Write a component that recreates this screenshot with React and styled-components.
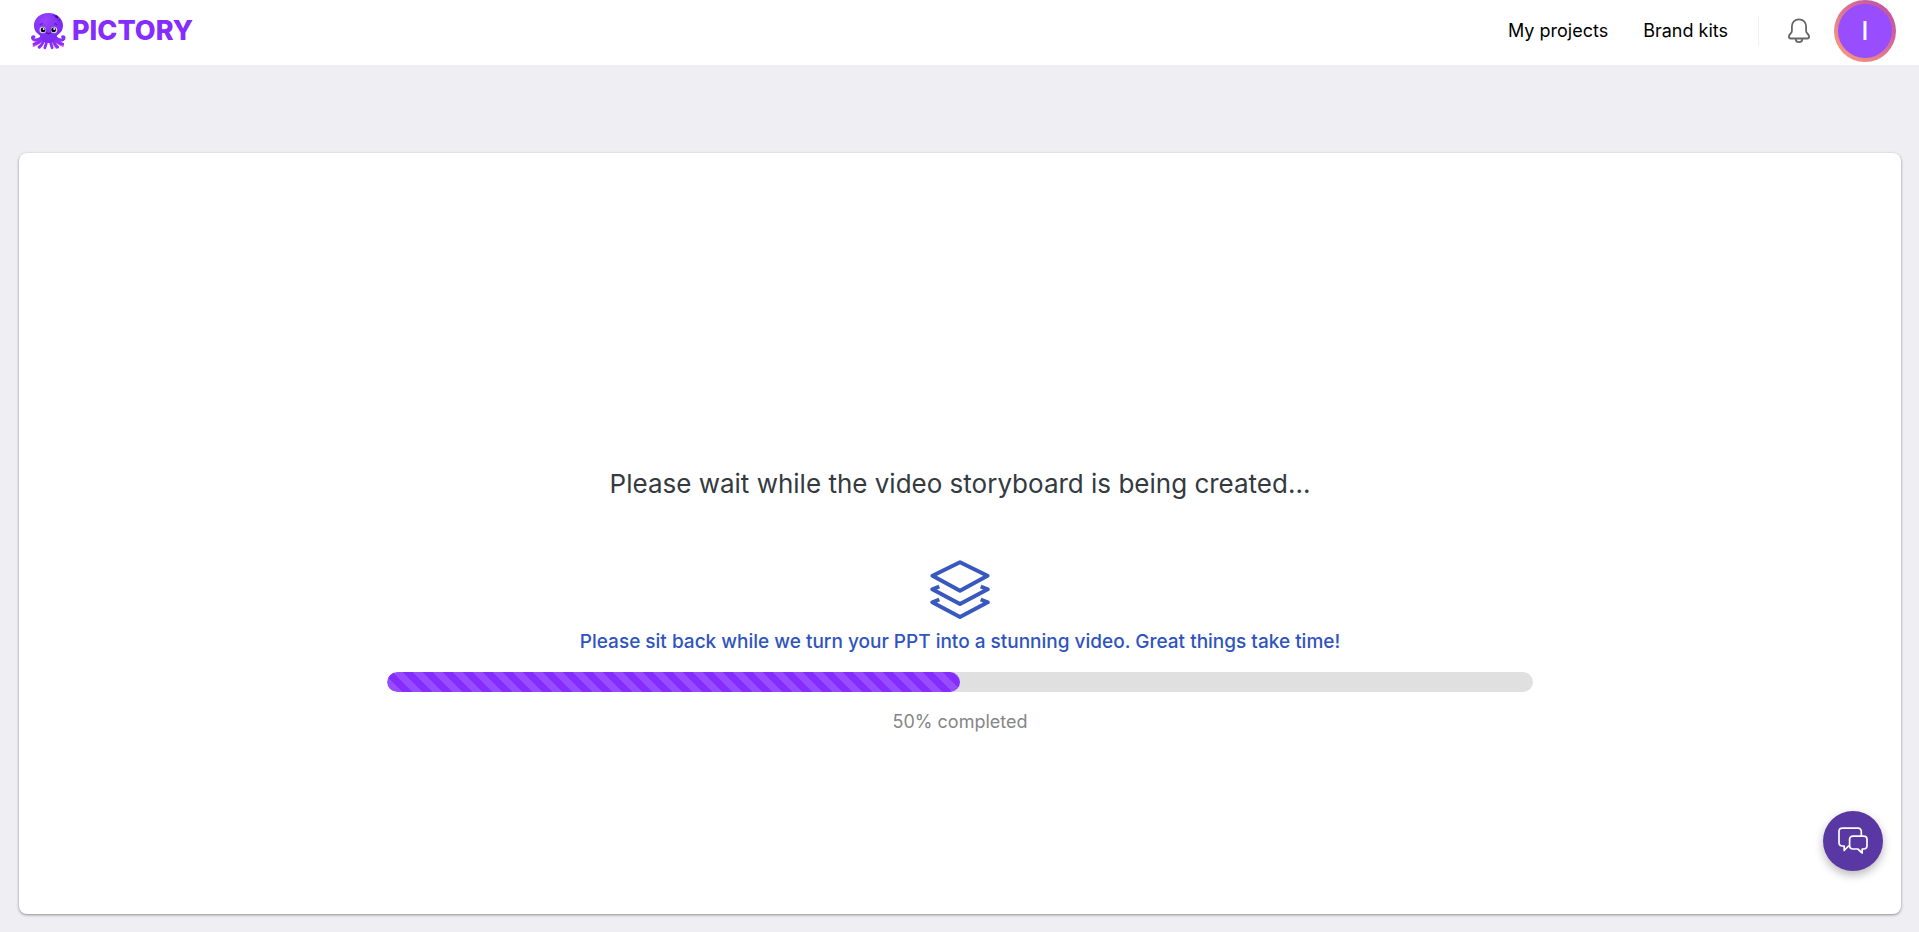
import React from "react";
import styled, { createGlobalStyle } from "styled-components";

const GlobalStyle = createGlobalStyle`
  * { box-sizing: border-box; }
  body {
    margin: 0;
    background: #eeeef3;
    font-family: Inter, "Liberation Sans", sans-serif;
  }
`;

const Page = styled.div`
  display: flex;
  flex-direction: column;
  min-height: 100vh;
`;

const Header = styled.header`
  display: flex;
  align-items: center;
  justify-content: space-between;
  height: 65px;
  padding: 0 23px 3px 30px;
  background: #ffffff;
`;

const Brand = styled.a`
  display: flex;
  align-items: center;
  gap: 6px;
  color: #852dff;
  text-decoration: none;
`;

const BrandName = styled.span`
  font-size: 27px;
  line-height: 32px;
  font-weight: 800;
`;

const HeaderRight = styled.div`
  display: flex;
  align-items: center;
`;

const Nav = styled.nav`
  display: flex;
  gap: 35px;
  padding-right: 30px;
  border-right: 1px solid #f0f0f3;
`;

const NavLink = styled.a`
  color: #000000;
  font-size: 18px;
  line-height: 30px;
  font-weight: 400;
  text-decoration: none;
`;

const IconButton = styled.button`
  display: flex;
  margin: 0 24px 0 29px;
  padding: 0;
  border: 0;
  background: none;
  color: #666666;
  cursor: pointer;
`;

const Avatar = styled.button`
  width: 62px;
  height: 62px;
  padding: 0;
  border: 4px solid transparent;
  border-radius: 50%;
  background:
    linear-gradient(#984dff, #984dff) padding-box,
    linear-gradient(45deg, #ff9f78, #b84aa8) border-box;
  color: #ffffff;
  font-family: inherit;
  font-size: 25px;
  font-weight: 500;
  cursor: pointer;
`;

const Main = styled.main`
  display: flex;
  flex: 1;
  padding: 88px 18px 18px 19px;
`;

const Card = styled.section`
  display: flex;
  flex: 1;
  flex-direction: column;
  align-items: center;
  justify-content: center;
  padding-top: 132px;
  border-radius: 8px;
  background: #ffffff;
  box-shadow: 0 1px 3px rgba(0, 0, 0, 0.4);
`;

const Title = styled.h1`
  margin: 0 0 56px;
  color: #343a40;
  font-size: 26px;
  line-height: 40px;
  font-weight: 400;
`;

const Message = styled.p`
  margin: 8px 0 16px;
  color: #2f54bf;
  font-size: 19px;
  line-height: 28px;
  font-weight: 500;
`;

const Track = styled.div`
  width: 60.9%;
  height: 20px;
  border-radius: 10px;
  overflow: hidden;
  background: #e0e0e0;
`;

const Fill = styled.div`
  height: 100%;
  border-radius: 10px;
  background-color: #852dff;
  background-image: linear-gradient(
    45deg,
    rgba(255, 255, 255, 0.15) 25%,
    transparent 25%,
    transparent 50%,
    rgba(255, 255, 255, 0.15) 50%,
    rgba(255, 255, 255, 0.15) 75%,
    transparent 75%
  );
  background-size: 20px 20px;
  background-position: 6px 0;
`;

const Status = styled.p`
  margin: 16px 0 0;
  color: #868686;
  font-size: 18px;
  line-height: 28px;
  font-weight: 400;
`;

const ChatButton = styled.button`
  position: fixed;
  right: 36px;
  bottom: 61px;
  display: flex;
  align-items: center;
  justify-content: center;
  width: 60px;
  height: 60px;
  padding: 0;
  border: 0;
  border-radius: 50%;
  background: #5a38a3;
  box-shadow: 0 4px 10px rgba(0, 0, 0, 0.28);
  cursor: pointer;
`;

const Octopus = () => (
  <svg width="36" height="38" viewBox="0 0 36 38" aria-hidden="true">
    <defs>
      <radialGradient id="skin" cx="0.4" cy="0.25" r="0.8">
        <stop offset="0" stopColor="#9a45ff" />
        <stop offset="0.6" stopColor="#7f2ef5" />
        <stop offset="1" stopColor="#7a2aec" />
      </radialGradient>
    </defs>
    <g fill="none" strokeLinecap="round">
      <g stroke="#f06be8" strokeWidth="2">
        <path d="M11 27.500C8 29.500 4.500 30 2.500 27" />
        <path d="M25 27.500C28 29.500 31.500 30 34 27" />
        <path d="M12 28.500C10 31 7 32.500 3.500 34" />
        <path d="M24 28.500C26 31 29 32.500 33 34" />
        <path d="M14 29C13 32 11.500 34 9.500 36" />
        <path d="M22 29C23 32 24.500 34 26.500 36" />
      </g>
      <g stroke="#8730fa" strokeWidth="2.800">
        <path d="M11 26C7.500 28.500 3.500 28.500 2.600 26.500C2.100 25 2.800 24.300 4 24.800" />
        <path d="M26 26C29.500 28.500 33 28.500 34 26.500C34.400 25 33.700 24.300 32.500 24.800" />
        <path d="M12 27.500C9.500 30.500 7 31.500 4 32.200" />
        <path d="M25 27.500C27.500 30.500 29.500 31.500 32.700 32.200" />
        <path d="M14 28C12.500 31.500 11 34 9 35" />
        <path d="M23 28C24.500 31.500 25.500 34 27.700 35" />
        <path d="M16.800 28C16.500 31.500 15.500 34 14.800 35.800" />
        <path d="M20.200 28C20.500 31.500 21.500 34 22.200 35.800" />
      </g>
    </g>
    <path
      d="M18.500 1C9.500 1 4 7 4 13.500C4 18.500 6.500 21 10 23.500C10 27 13 31 18.500 31C24 31 27 27 27 23.500C30.500 21 33 18.500 33 13.500C33 7 27 1 18.500 1Z"
      fill="url(#skin)"
    />
    <g fill="#431391">
      <ellipse cx="26.500" cy="4.800" rx="2.100" ry="1.300" transform="rotate(35 26.500 4.800)" />
      <circle cx="29.200" cy="8" r="0.800" />
      <circle cx="23.500" cy="3.300" r="0.500" />
    </g>
    <path d="M9.500 12.800Q11 11.500 13 12M27 12.800Q26 11.500 24 12" fill="none" stroke="#431391" strokeWidth="0.800" />
    <circle cx="12.700" cy="18" r="3.200" fill="#ded5ee" />
    <circle cx="24" cy="18" r="3.200" fill="#ded5ee" />
    <circle cx="13.100" cy="17.900" r="2.400" fill="#08050d" />
    <circle cx="23.600" cy="17.900" r="2.400" fill="#08050d" />
    <circle cx="13.700" cy="17" r="0.900" fill="#ffffff" />
    <circle cx="24.200" cy="17" r="0.900" fill="#ffffff" />
    <path d="M16.300 20.800Q18.500 22.800 20.700 20.800" fill="none" stroke="#2b0866" strokeWidth="1" />
  </svg>
);

const Bell = () => (
  <svg width="22" height="26" viewBox="0 0 22 26" fill="none" stroke="currentColor" strokeWidth="1.800" strokeLinejoin="round" aria-hidden="true">
    <path d="M11 1.300C6.800 1.300 3.900 4.300 3.900 8.300V13C3.900 15.500 0.900 16 0.900 18.500C0.900 20 1.700 20.500 2.800 20.500H19.200C20.300 20.500 21.100 20 21.100 18.500C21.100 16 18.100 15.500 18.100 13V8.300C18.100 4.300 15.200 1.300 11 1.300Z" />
    <path d="M7.700 20.500C7.700 22.900 9 24.200 11 24.200C13 24.200 14.300 22.900 14.300 20.500" />
  </svg>
);

const Layers = () => (
  <svg width="60" height="60" viewBox="0 0 60 60" fill="none" stroke="#3858c0" strokeWidth="4" strokeLinejoin="round" aria-hidden="true">
    <path d="M30 2.300L57.500 15.800L30 30.800L2.500 15.800Z" />
    <path d="M9.300 26.500L2.300 29.300L30 44L57.700 29.300L50.700 26.500" />
    <path d="M9.300 39.500L2.300 42.300L30 57L57.700 42.300L50.700 39.500" />
  </svg>
);

const ChatBubbles = () => (
  <svg width="30" height="28" viewBox="0 0 30 28" fill="none" stroke="#ffffff" strokeWidth="1.700" strokeLinejoin="round" aria-hidden="true">
    <path d="M23.300 9V4.500C23.300 2.300 22 1.200 20 1.200H4.500C2.300 1.200 1 2.500 1 4.500V15.500C1 17.800 2.300 19 4.500 19H6.200V23.500L10.500 19H11.800" />
    <path d="M15 9.200H25.500C27.800 9.200 29 10.400 29 12.500V18.500C29 20.800 27.800 22 25.500 22H24.200V26L19.800 22H15C12.800 22 11.600 20.800 11.600 18.500V12.500C11.600 10.400 12.800 9.200 15 9.200Z" />
  </svg>
);

export default function App() {
  const progress = 50;
  return (
    <Page>
      <GlobalStyle />
      <Header>
        <Brand href="#">
          <Octopus />
          <BrandName>PICTORY</BrandName>
        </Brand>
        <HeaderRight>
          <Nav>
            <NavLink href="#projects">My projects</NavLink>
            <NavLink href="#brand-kits">Brand kits</NavLink>
          </Nav>
          <IconButton type="button" aria-label="Notifications">
            <Bell />
          </IconButton>
          <Avatar type="button">I</Avatar>
        </HeaderRight>
      </Header>
      <Main>
        <Card>
          <Title>Please wait while the video storyboard is being created...</Title>
          <Layers />
          <Message>Please sit back while we turn your PPT into a stunning video. Great things take time!</Message>
          <Track role="progressbar" aria-label="Storyboard progress" aria-valuenow={progress} aria-valuemin={0} aria-valuemax={100}>
            <Fill style={{ width: `${progress}%` }} />
          </Track>
          <Status>{progress}% completed</Status>
        </Card>
      </Main>
      <ChatButton type="button" aria-label="Open chat">
        <ChatBubbles />
      </ChatButton>
    </Page>
  );
}
